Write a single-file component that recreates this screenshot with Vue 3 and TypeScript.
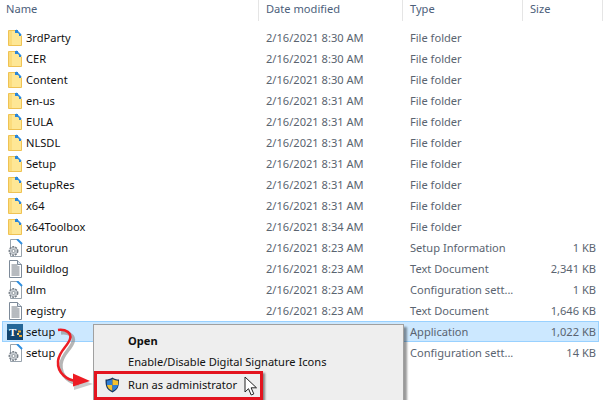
<script setup lang="ts">
type Kind = 'folder' | 'config' | 'text' | 'app'
interface Row { name: string; date: string; type: string; size: string; kind: Kind; selected?: boolean }
const folder = (name: string, time: string): Row => ({ name, date: `2/16/2021 ${time} AM`, type: 'File folder', size: '', kind: 'folder' })
const rows: Row[] = [
  folder('3rdParty', '8:30'), folder('CER', '8:30'), folder('Content', '8:30'), folder('en-us', '8:31'),
  folder('EULA', '8:31'), folder('NLSDL', '8:31'), folder('Setup', '8:31'), folder('SetupRes', '8:31'),
  folder('x64', '8:31'), folder('x64Toolbox', '8:34'),
  { name: 'autorun', date: '2/16/2021 8:23 AM', type: 'Setup Information', size: '1 KB', kind: 'config' },
  { name: 'buildlog', date: '2/16/2021 8:23 AM', type: 'Text Document', size: '2,341 KB', kind: 'text' },
  { name: 'dlm', date: '2/16/2021 8:23 AM', type: 'Configuration sett...', size: '1 KB', kind: 'config' },
  { name: 'registry', date: '2/16/2021 8:23 AM', type: 'Text Document', size: '1,646 KB', kind: 'text' },
  { name: 'setup', date: '', type: 'Application', size: '1,022 KB', kind: 'app', selected: true },
  { name: 'setup', date: '', type: 'Configuration sett...', size: '14 KB', kind: 'config' },
]
</script>

<template>
  <div class="explorer">
    <div class="head">
      <div class="hcell name-h">Name</div>
      <div class="hcell">Date modified</div>
      <div class="hcell">Type</div>
      <div class="hcell">Size</div>
    </div>
    <div class="list">
      <div v-for="(r, i) in rows" :key="i" class="row" :class="{ selected: r.selected }">
        <div class="name">
          <svg class="icon" width="16" height="18" viewBox="0 0 16 18">
            <template v-if="r.kind === 'folder'">
              <path d="M1.500 1.500H9l5.500 5.500v9.500H1.500z" fill="#fee795" stroke="#efc253" />
              <path d="M2 2h3v14H2z" fill="#fbdc7c" />
              <path d="M9 1l5 5" stroke="#2f8fe0" stroke-width="1.600" />
              <rect x="8" y="1" width="3" height="3" fill="#2b86d8" />
              <rect x="12" y="5" width="2" height="2" fill="#2b86d8" />
            </template>
            <template v-else-if="r.kind === 'text'">
              <path d="M2.500 .5h8l4 4v13h-12z" fill="#fff" stroke="#7d8a99" />
              <path d="M4.500 5h6M4.500 7h8M4.500 9h8M4.500 11h8M4.500 13h8M4.500 15h8" stroke="#6f7680" />
              <path d="M10.500 .5v4h4" fill="#dfe6ee" stroke="#7d8a99" />
            </template>
            <template v-else-if="r.kind === 'config'">
              <path d="M3.500 .5h7l4 4v13h-11z" fill="#fff" stroke="#98a3ad" />
              <path d="M10 0l5 5" stroke="#2f8fe0" stroke-width="2" />
              <circle cx="6.500" cy="12" r="4.200" fill="#c9ced3" stroke="#777f87" stroke-width="1.500" stroke-dasharray="2 1" />
              <circle cx="6.500" cy="12" r="1.500" fill="#fff" stroke="#777f87" stroke-width=".7" />
            </template>
            <template v-else>
              <rect x="0" y="1" width="16" height="16" fill="#12456f" />
              <rect x="0" y="1" width="16" height="6" fill="#2f79ad" opacity=".65" />
              <text x="2" y="12.500" class="tk">T</text>
              <path d="M11 7.500h3v2h-3zM12 12h3v2h-3z" fill="#e8a52c" />
              <path d="M10 10h2v2h-2z" fill="#f3d37a" />
            </template>
          </svg>
          <span>{{ r.name }}</span>
        </div>
        <div class="cell">{{ r.date }}</div>
        <div class="cell">{{ r.type }}</div>
        <div class="cell size">{{ r.size }}</div>
      </div>
    </div>

    <div class="menu">
      <div class="item bold">Open</div>
      <div class="item">Enable/Disable Digital Signature Icons</div>
      <div class="item admin">
        <svg class="shield" width="15" height="16" viewBox="0 0 15 16">
          <path d="M7.500 .5c2 1.500 4 2 6.500 2 0 6 -.5 10 -6.500 13C1 12.500 .5 8.500 .5 2.500c2.500 0 4.500 -.5 7 -2z" fill="#16365f" />
          <path d="M7.500 2v6H2c-.2-1.500-.2-3-.2-4.300 2 0 3.700-.6 5.700-1.700z" fill="#2f7fd6" />
          <path d="M7.500 2c2 1.100 3.700 1.700 5.700 1.700 0 1.300 0 2.800-.2 4.300H7.500z" fill="#f4c22f" />
          <path d="M2 8h5.500v6C4 12.500 2.500 10.500 2 8z" fill="#f4c22f" />
          <path d="M7.500 8H13c-.5 2.500-2 4.500-5.500 6z" fill="#2f7fd6" />
        </svg>
        <span>Run as administrator</span>
        <svg class="cursor" width="14" height="21" viewBox="0 0 14 21">
          <path d="M1 1v15l3.500-3.300 2.700 6.300 2.600-1.100-2.700-6.100H12.500z" fill="#fff" stroke="#222" stroke-width="1" stroke-linejoin="round" />
        </svg>
      </div>
    </div>

    <svg class="arrow" width="614" height="400" viewBox="0 0 614 400">
      <path d="M61 333c8 -1 14 3 12 9-2 7-11 12-12 22-1 13 10 19 18 20" fill="none" stroke="#8f8f8f" stroke-width="3.500" opacity=".65" />
      <path d="M74 377l19 7-19 6z" fill="#a9a9a9" opacity=".6" />
      <path d="M58 330c8 -1 14 3 12 9-2 7-11 12-12 22-1 13 10 19 18 20" fill="none" stroke="#ed1c24" stroke-width="2.500" />
      <path d="M73 373.500l17 7.500-17 5.500z" fill="#ed1c24" />
    </svg>
  </div>
</template>

<style scoped>
.explorer {
  position: relative;
  width: 614px;
  height: 400px;
  overflow: hidden;
  background: #fff;
  font-family: "Noto Sans", "Open Sans", sans-serif;
  font-size: 11.1px;
  color: #111;
}
.head, .row {
  display: grid;
  grid-template-columns: 257px 144px 120px 76px;
  width: 597px;
  margin-left: 2px;
}
.head {
  height: 21px;
  width: 601px;
  grid-template-columns: 257px 144px 120px 80px;
  color: #4c607a;
  line-height: 17px;
}
.hcell {
  padding-left: 7px;
  border-right: 1px solid #e5e5e5;
}
.hcell.name-h { padding-left: 4px; }
.list { padding-top: 6px; }
.row {
  height: 21px;
  line-height: 21px;
  box-sizing: border-box;
}
.row.selected {
  background: #cce8ff;
  outline: 1px solid #99d1ff;
  outline-offset: -1px;
}
.name {
  display: flex;
  align-items: center;
  padding-left: 5px;
  gap: 3px;
}
.icon { flex: none; }
.cell {
  padding-left: 7px;
  color: #5a6470;
  white-space: nowrap;
}
.size {
  padding: 0 3px 0 0;
  text-align: right;
}
.tk {
  font-family: "Liberation Serif", serif;
  font-size: 11px;
  font-weight: 700;
  fill: #fff;
}
.menu {
  position: absolute;
  left: 93px;
  top: 324px;
  width: 311px;
  height: 76px;
  box-sizing: border-box;
  padding-top: 5px;
  background: #eee;
  border: 1px solid #a0a0a0;
  border-bottom: 0;
  box-shadow: 3px 3px 2px rgba(0, 0, 0, .4);
}
.item {
  height: 21px;
  line-height: 21px;
  padding-left: 34px;
  color: #111;
  white-space: nowrap;
}
.bold { font-weight: 700; }
.admin {
  position: absolute;
  left: 0;
  top: 46px;
  width: 169px;
  height: 29px;
  box-sizing: border-box;
  line-height: 22px;
  border: 3px solid #e3141f;
  padding-left: 31px;
  display: flex;
  background: #eee;
  box-shadow: 2px 2px 2px rgba(0, 0, 0, .45);
}
.shield {
  position: absolute;
  left: 8px;
  top: 3px;
}
.cursor {
  position: absolute;
  left: 147px;
  top: 2px;
}
.arrow {
  position: absolute;
  left: 0;
  top: 0;
  pointer-events: none;
}
</style>
